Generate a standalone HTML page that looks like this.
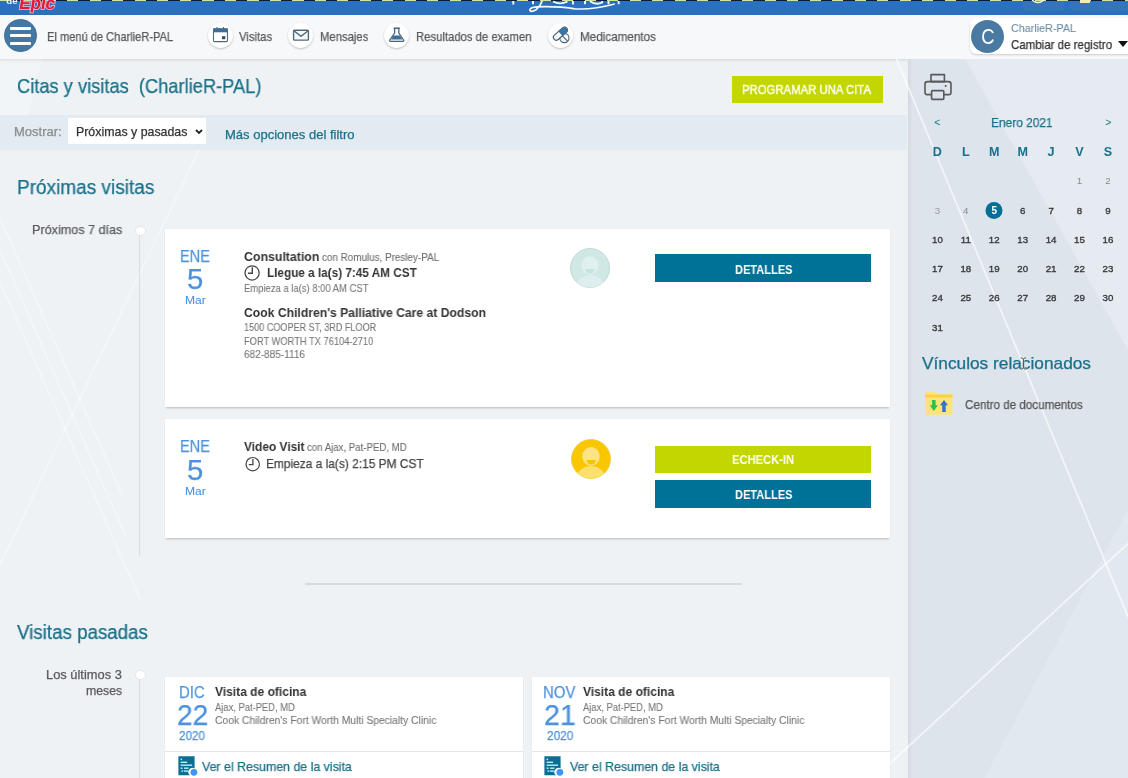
<!DOCTYPE html>
<html><head><meta charset="utf-8">
<style>
*{margin:0;padding:0;box-sizing:border-box}
html,body{width:1128px;height:778px;overflow:hidden}
body{position:relative;background:#eef2f5;font-family:"Liberation Sans",sans-serif;color:#333}
.a{position:absolute}
.t{position:absolute;white-space:nowrap;transform-origin:0 0;line-height:normal;font-family:"Liberation Sans",sans-serif;will-change:transform;-webkit-text-stroke:.25px currentColor}
.circ{position:absolute;border-radius:50%}
.card{position:absolute;background:#fff;box-shadow:0 2px 2px -1px rgba(0,0,0,.22),0 0 1px rgba(0,0,0,.06)}
svg{position:absolute;overflow:visible;will-change:transform}
</style></head><body>
<!-- main background decoration -->
<svg style="left:0;top:0" width="908" height="778">
 <polygon points="0,59 42,59 28,115 0,115" fill="#ffffff" fill-opacity=".25"/>
 <g stroke="#ffffff" stroke-opacity=".3" stroke-width="2.4" fill="none" stroke-linecap="round">
  <line x1="0" y1="282" x2="140" y2="599"/>
  <line x1="0" y1="250" x2="126" y2="537"/>
  <line x1="0" y1="218" x2="123" y2="497"/>
  <line x1="0" y1="565" x2="200" y2="148"/>
 </g>
</svg>

<!-- banner -->
<div class="a" style="left:0;top:0;width:1128px;height:15px;background:#2a70bf"></div>
<div class="a" style="left:1023px;top:0;width:41px;height:11px;background:#3573ba;border-radius:0 0 4px 4px"></div>
<div class="a" style="left:1070px;top:0;width:60px;height:11px;background:#3573ba;border-radius:0 0 4px 4px"></div>
<div class="a" style="left:0;top:0;width:1128px;height:1.3px;background:repeating-linear-gradient(90deg,#d3e49c 0 11px,#081c3e 11px 22.5px)"></div>
<svg style="left:1030px;top:0" width="20" height="6"><path d="M2 0 Q8 5 14 0" stroke="#f4f8e8" stroke-width="1.5" fill="none"/></svg>
<div class="a" style="left:1080px;top:0;width:10px;height:2.5px;background:#f3ecb0"></div>
<svg style="left:0;top:0" width="80" height="15">
 <text x="5.5" y="4.2" font-family="Liberation Sans" font-size="8.5" font-weight="bold" fill="#eaf6ff" transform="translate(0,0) scale(1.15,1)">de</text>
 <g transform="translate(18.6,9.4) skewX(-9) scale(1.02,1)">
  <text x="0" y="0" font-family="Liberation Sans" font-size="17" font-weight="bold" fill="#e0183c" stroke="#f2c4d2" stroke-width="1.5" paint-order="stroke" letter-spacing="-.3">Epic</text>
 </g>
</svg>
<svg style="left:0;top:0" width="1128" height="15">
 <g fill="none" stroke="#f4fbff" stroke-width="1.9" stroke-linecap="butt">
  <path d="M513.3 1 V4.5 M533 1 V4.2 M573 1 V4.5 M585 1 V4.2 M608.5 1 V4.2 M618.7 1 V4.2"/>
  <path d="M553 1.5 Q560 5.2 567.5 1.5"/>
  <path d="M590 1.2 Q596 5.5 602.2 2.5 V1"/>
  <path d="M542.2 1 Q540.5 6 536 9.8 Q530.5 13 529.8 10 Q530 7.2 537 6.8 Q560 6.2 575 8.8 Q592 10 614.8 4" stroke-width="1.7"/>
 </g>
</svg>

<!-- header -->
<div class="a" style="left:0;top:15px;width:1128px;height:44px;background:#f7f8fa;box-shadow:0 1px 3px rgba(0,0,0,.12)"></div>

<!-- sidebar -->
<div class="a" style="left:908px;top:59px;width:220px;height:719px;background:#dde4ec;overflow:hidden">
 <svg style="left:0;top:0" width="220" height="719">
  <polygon points="57,0 220,0 220,291" fill="#ffffff" fill-opacity=".25"/>
  <polygon points="76.5,719 220,450 220,719" fill="#ffffff" fill-opacity=".16"/>
 </svg>
</div>
<div class="a" style="left:908px;top:59px;width:5px;height:719px;background:linear-gradient(90deg,#d3dadf,#d9dfe5 50%,#dfe5eb)"></div>
<svg style="left:0;top:0" width="1128" height="778">
 <g stroke="#ffffff" stroke-opacity=".65" stroke-width="1.8" fill="none">
  <line x1="896.5" y1="59" x2="1128" y2="616.8"/>
  <line x1="870" y1="782" x2="1128" y2="543.4"/>
 </g>
</svg>
<!-- filter bar -->
<div class="a" style="left:0;top:115px;width:907px;height:35px;background:#e2ebf1"></div>
<div class="a" style="left:68px;top:118px;width:138px;height:26px;background:#fff"></div>
<svg style="left:195px;top:129px" width="8" height="6"><path d="M1 1 L4 4 L7 1" stroke="#222" stroke-width="1.8" fill="none"/></svg>

<!-- hamburger -->
<div class="circ" style="left:4px;top:19px;width:33px;height:33px;background:#4577a3;border:1px solid #3d6d97;box-shadow:0 0 1px rgba(0,0,0,.15)"></div>
<div class="a" style="left:10.2px;top:26.6px;width:20.8px;height:3px;background:#fff;border-radius:1px"></div>
<div class="a" style="left:10.2px;top:33.9px;width:20.8px;height:3px;background:#fff;border-radius:1px"></div>
<div class="a" style="left:10.2px;top:41.7px;width:20.8px;height:3px;background:#fff;border-radius:1px"></div>

<!-- nav icons -->
<div class="circ" style="left:207.5px;top:23.3px;width:25px;height:25px;background:#fff;box-shadow:0 1px 2px rgba(60,50,40,.28)"></div>
<svg style="left:207.5px;top:23.3px" width="25" height="25">
 <rect x="5.5" y="5.8" width="14" height="12.8" rx="1" fill="#fff" stroke="#4f6b82" stroke-width="1.1"/>
 <rect x="5" y="5.5" width="15" height="3.8" fill="#3f6d95"/>
 <line x1="9" y1="4" x2="9" y2="6" stroke="#3f6d95" stroke-width="1"/>
 <line x1="15.5" y1="4" x2="15.5" y2="6" stroke="#3f6d95" stroke-width="1"/>
 <rect x="14" y="13.2" width="3.3" height="3" fill="#2f4d66"/>
</svg>
<div class="circ" style="left:288px;top:23.3px;width:25px;height:25px;background:#fff;box-shadow:0 1px 2px rgba(60,50,40,.28)"></div>
<svg style="left:288px;top:23.3px" width="25" height="25">
 <rect x="5.6" y="7.3" width="14.8" height="9.8" rx=".8" fill="#f3fbff" stroke="#52697c" stroke-width="1.4"/>
 <path d="M6.2 8 L13 13.3 L19.8 8" fill="none" stroke="#52697c" stroke-width="1.4"/>
</svg>
<div class="circ" style="left:384.2px;top:23.3px;width:25px;height:25px;background:#fff;box-shadow:0 1px 2px rgba(60,50,40,.28)"></div>
<svg style="left:384.2px;top:23.3px" width="25" height="25">
 <path d="M10.6 5.4 v4.6 L5.8 17 Q5.2 18.3 6.6 18.3 H18.8 Q20.2 18.3 19.6 17 L14.8 10 V5.4" fill="#f3fbff" stroke="#4a6378" stroke-width="1.3" stroke-linejoin="round"/>
 <line x1="9.6" y1="5.2" x2="15.8" y2="5.2" stroke="#4a6378" stroke-width="1.5"/>
 <path d="M9.4 12.6 H16 L18.2 16.6 H7.2 Z" fill="#3f6d95"/>
</svg>
<div class="circ" style="left:548px;top:23.3px;width:25px;height:25px;background:#fff;box-shadow:0 1px 2px rgba(60,50,40,.28)"></div>
<svg style="left:548px;top:23.3px" width="25" height="25">
 <circle cx="16.4" cy="15" r="4.6" fill="#f3fbff" stroke="#4a5d6c" stroke-width="1.1"/>
 <line x1="13.2" y1="11.8" x2="19.6" y2="18.2" stroke="#4a5d6c" stroke-width="1.1"/>
 <g transform="translate(12.4 10.7) rotate(-41)">
  <rect x="-8.4" y="-2.9" width="16.8" height="5.8" rx="2.9" fill="#f3fbff" stroke="#4a5d6c" stroke-width="1.1"/>
  <path d="M0 -3.45 H5 A3.45 3.45 0 0 1 5 3.45 H0 Z" fill="#3f73a0"/>
 </g>
</svg>

<!-- profile pill -->
<div class="a" style="left:970px;top:18px;width:170px;height:36px;background:#fff;border-radius:6px;box-shadow:0 1px 2px rgba(0,0,0,.18)"></div>
<div class="circ" style="left:971px;top:20px;width:33px;height:33px;background:#4a7aa2"></div>
<svg style="left:971px;top:20px" width="33" height="33"><text x="0" y="0" transform="translate(16.8,24.4) scale(.86,1)" text-anchor="middle" font-family="Liberation Sans" font-size="21.5" fill="#fff">C</text></svg>
<svg style="left:1118px;top:41px" width="10" height="7"><path d="M0 0 H10 L5 6 Z" fill="#111"/></svg>

<!-- title button -->
<div class="a" style="left:732px;top:76px;width:151px;height:27px;background:#c4d600"></div>

<!-- timelines -->
<div class="a" style="left:139px;top:231px;width:1px;height:325px;background:#d8dde2"></div>
<div class="circ" style="left:136.2px;top:226.7px;width:8.4px;height:8.4px;background:#fff;box-shadow:0 0 0 .6px #d8dee3"></div>
<div class="a" style="left:305px;top:583px;width:437px;height:2px;background:#d6dbe0"></div>
<div class="a" style="left:139px;top:676px;width:1px;height:102px;background:#d8dde2"></div>
<div class="circ" style="left:136.2px;top:671px;width:8.4px;height:8.4px;background:#fff;box-shadow:0 0 0 .6px #d8dee3"></div>

<!-- cards -->
<div class="card" style="left:165px;top:229px;width:725px;height:178px"></div>
<div class="card" style="left:165px;top:419px;width:725px;height:119px"></div>
<div class="card" style="left:165px;top:677px;width:358px;height:120px"></div>
<div class="card" style="left:532px;top:677px;width:358px;height:120px"></div>
<div class="a" style="left:165px;top:751px;width:358px;height:1px;background:#e3e6e9"></div>
<div class="a" style="left:532px;top:751px;width:358px;height:1px;background:#e3e6e9"></div>

<!-- buttons -->
<div class="a" style="left:655px;top:254px;width:216px;height:28px;background:#007298"></div>
<div class="a" style="left:655px;top:446px;width:216px;height:26.6px;background:#c4d600"></div>
<div class="a" style="left:655px;top:480px;width:216px;height:28px;background:#007298"></div>

<!-- clocks -->
<svg style="left:244px;top:265px" width="16" height="16">
 <circle cx="8.1" cy="7.9" r="7.1" fill="none" stroke="#444" stroke-width="1.25"/>
 <path d="M8.3 2.2 V8.3 H3.9" fill="none" stroke="#444" stroke-width="1.4"/>
</svg>
<svg style="left:244.5px;top:456.8px" width="16" height="16">
 <circle cx="7.7" cy="7.2" r="6.7" fill="none" stroke="#444" stroke-width="1.2"/>
 <path d="M7.9 2 V7.7 H3.8" fill="none" stroke="#444" stroke-width="1.3"/>
</svg>

<!-- avatars -->
<svg style="left:570px;top:248px" width="40" height="40">
 <defs><clipPath id="c1"><circle cx="20" cy="20" r="19.5"/></clipPath></defs>
 <circle cx="20" cy="20" r="19.5" fill="#cfe8e5" stroke="#c3d9d6" stroke-width="1"/>
 <g clip-path="url(#c1)">
  <ellipse cx="20" cy="40" rx="14.5" ry="13" fill="#dceeed"/>
  <ellipse cx="20" cy="17.5" rx="8.7" ry="9.3" fill="#dff0ef"/>
  <path d="M15.4 21 A4.6 4.6 0 0 0 24.6 21 Z" fill="#c8e4e1"/>
 </g>
</svg>
<svg style="left:570.6px;top:439.2px" width="40" height="40">
 <defs><clipPath id="c2"><circle cx="20" cy="20" r="19.5"/></clipPath></defs>
 <circle cx="20" cy="20" r="19.5" fill="#f8c700" stroke="#f1cf4a" stroke-width="1"/>
 <g clip-path="url(#c2)">
  <ellipse cx="20" cy="40" rx="14.5" ry="13" fill="#fbe070"/>
  <ellipse cx="20" cy="17.3" rx="8.7" ry="9.4" fill="#fce486"/>
  <path d="M15.6 21 A4.6 4.6 0 0 0 24.8 21 Z" fill="#f7c500"/>
 </g>
</svg>

<!-- doc icons -->
<svg style="left:177.5px;top:756.3px" width="22" height="22">
 <path d="M0.4 0.2 H16.6 V12.6 A4 4 0 0 0 12.2 19.3 H0.4 Z" fill="#0a6f93"/>
 <g fill="#b7f1ff">
  <rect x="2.6" y="2.6" width="1.5" height="1.5"/>
  <rect x="2.6" y="5.6" width="6.5" height="1.4"/>
  <rect x="2.6" y="8.5" width="11.5" height="1.4"/>
  <rect x="2.6" y="11.5" width="2" height="1.4"/><rect x="6" y="11.5" width="4.5" height="1.4"/>
  <rect x="3.4" y="14.4" width="1.8" height="1.4"/><rect x="6" y="14.4" width="4.2" height="1.4"/>
 </g>
 <circle cx="15.9" cy="16.3" r="3.4" fill="#3c97f2"/>
</svg>
<svg style="left:544.3px;top:756.3px" width="22" height="22">
 <path d="M0.4 0.2 H16.6 V12.6 A4 4 0 0 0 12.2 19.3 H0.4 Z" fill="#0a6f93"/>
 <g fill="#b7f1ff">
  <rect x="2.6" y="2.6" width="1.5" height="1.5"/>
  <rect x="2.6" y="5.6" width="6.5" height="1.4"/>
  <rect x="2.6" y="8.5" width="11.5" height="1.4"/>
  <rect x="2.6" y="11.5" width="2" height="1.4"/><rect x="6" y="11.5" width="4.5" height="1.4"/>
  <rect x="3.4" y="14.4" width="1.8" height="1.4"/><rect x="6" y="14.4" width="4.2" height="1.4"/>
 </g>
 <circle cx="15.9" cy="16.3" r="3.4" fill="#3c97f2"/>
</svg>

<!-- printer -->
<svg style="left:918px;top:68px" width="40" height="36">
 <g fill="none" stroke="#58595b" stroke-width="1.6" stroke-linejoin="round">
  <rect x="13" y="6.6" width="13.4" height="7"/>
  <path d="M13.4 26.6 H9 Q7 26.6 7 24.6 V16 Q7 13.6 9.6 13.6 H30.4 Q33 13.6 33 16 V24.6 Q33 26.6 31 26.6 H26"/>
  <rect x="13.6" y="22.6" width="12.2" height="8.8" rx=".8"/>
 </g>
 <circle cx="27.6" cy="18" r="1" fill="#58595b"/>
</svg>

<!-- calendar -->
<svg style="left:908px;top:100px" width="220" height="240">
 <g font-family="Liberation Sans" fill="#1b7088" font-size="13">
  <text x="29.4" y="25.8" text-anchor="middle" font-size="10.5">&lt;</text>
  <text x="200.3" y="25.8" text-anchor="middle" font-size="10.5">&gt;</text>
 </g>
 <g font-family="Liberation Sans" font-weight="bold" fill="#16708f" font-size="12.6" text-anchor="middle">
  <text x="29.4" y="56">D</text><text x="57.8" y="56">L</text><text x="86.2" y="56">M</text><text x="114.7" y="56">M</text><text x="143.1" y="56">J</text><text x="171.5" y="56">V</text><text x="200" y="56">S</text>
 </g>
 <circle cx="86" cy="110.4" r="8.5" fill="#046e95"/>
 <g font-family="Liberation Sans" font-size="9.7" text-anchor="middle" fill="#383838" stroke="#383838" stroke-width=".35">
  <text x="171.5" y="84.2" fill="#8a8a8a" stroke="none" font-size="9.8">1</text><text x="200" y="84.2" fill="#8a8a8a" stroke="none" font-size="9.8">2</text>
  <text x="29.4" y="113.5" fill="#9a9a9a" stroke="none" font-size="9.8">3</text><text x="57.8" y="113.5" fill="#8a8a8a" stroke="none" font-size="9.8">4</text><text x="86.2" y="113.5" fill="#fff" stroke="none" font-weight="bold" font-size="10">5</text><text x="114.7" y="113.5">6</text><text x="143.1" y="113.5">7</text><text x="171.5" y="113.5">8</text><text x="200" y="113.5">9</text>
  <text x="29.4" y="142.8">10</text><text x="57.8" y="142.8">11</text><text x="86.2" y="142.8">12</text><text x="114.7" y="142.8">13</text><text x="143.1" y="142.8">14</text><text x="171.5" y="142.8">15</text><text x="200" y="142.8">16</text>
  <text x="29.4" y="172.1">17</text><text x="57.8" y="172.1">18</text><text x="86.2" y="172.1">19</text><text x="114.7" y="172.1">20</text><text x="143.1" y="172.1">21</text><text x="171.5" y="172.1">22</text><text x="200" y="172.1">23</text>
  <text x="29.4" y="201.4">24</text><text x="57.8" y="201.4">25</text><text x="86.2" y="201.4">26</text><text x="114.7" y="201.4">27</text><text x="143.1" y="201.4">28</text><text x="171.5" y="201.4">29</text><text x="200" y="201.4">30</text>
  <text x="29.4" y="230.7">31</text>
 </g>
</svg>

<!-- folder -->
<svg style="left:925px;top:392px" width="28" height="24" overflow="visible">
 <path d="M0 0.5 Q0 0 0.5 0 H11 L13 2.6 H27.5 V22.8 H0 Z" fill="#fde37a"/>
 <rect x="0" y="2.6" width="27.5" height="3" fill="#f9d340"/>
 <path d="M7.1 8 H10.6 V13.3 H12.9 L8.85 19 L4.8 13.3 H7.1 Z" fill="#2fbb58"/>
 <path d="M17.2 19.9 H20.7 V13.3 H23 L19 8.1 L15 13.3 H17.2 Z" fill="#2f74c8"/>
</svg>

<div class="t" style="left:46.80px;top:29.60px;font-size:12.35px;color:#58595b;transform:scaleX(0.8986);">El menú de CharlieR-PAL</div>
<div class="t" style="left:239.00px;top:29.50px;font-size:12.35px;color:#58595b;transform:scaleX(0.9177);">Visitas</div>
<div class="t" style="left:319.59px;top:29.50px;font-size:12.35px;color:#58595b;transform:scaleX(0.9137);">Mensajes</div>
<div class="t" style="left:416.00px;top:29.60px;font-size:12.5px;color:#58595b;transform:scaleX(0.9030);">Resultados de examen</div>
<div class="t" style="left:580.25px;top:29.50px;font-size:12.35px;color:#58595b;transform:scaleX(0.9457);">Medicamentos</div>
<div class="t" style="left:1011.30px;top:20.70px;font-size:11.63px;color:#6d8ca6;-webkit-text-stroke:.1px currentColor;transform:scaleX(0.9259);">CharlieR-PAL</div>
<div class="t" style="left:1011.30px;top:37.30px;font-size:12.79px;color:#333333;transform:scaleX(0.9008);">Cambiar de registro</div>
<div class="t" style="left:16.57px;top:74.50px;font-size:19.62px;color:#1b7088;transform:scaleX(0.9321);">Citas y visitas  (CharlieR-PAL)</div>
<div class="t" style="left:742.47px;top:82.30px;font-size:13.66px;color:#fbfde8;-webkit-text-stroke:.5px currentColor;transform:scaleX(0.8305);">PROGRAMAR UNA CITA</div>
<div class="t" style="left:13.68px;top:124.60px;font-size:12.21px;color:#8a8c8e;transform:scaleX(1.0655);">Mostrar:</div>
<div class="t" style="left:75.60px;top:124.60px;font-size:12.06px;color:#333333;transform:scaleX(1.0272);">Próximas y pasadas</div>
<div class="t" style="left:225.08px;top:126.50px;font-size:12.79px;color:#1b7088;transform:scaleX(1.0186);">Más opciones del filtro</div>
<div class="t" style="left:17.04px;top:175.60px;font-size:19.77px;color:#1b7088;transform:scaleX(0.9613);">Próximas visitas</div>
<div class="t" style="left:31.51px;top:221.75px;font-size:12.72px;color:#58595b;transform:scaleX(0.9908);">Próximos 7 días</div>
<div class="t" style="left:17.20px;top:621.90px;font-size:19.33px;color:#1b7088;transform:scaleX(0.9698);">Visitas pasadas</div>
<div class="t" style="left:45.89px;top:667.00px;font-size:12.72px;color:#58595b;transform:scaleX(1.0127);">Los últimos 3</div>
<div class="t" style="left:85.80px;top:684.00px;font-size:12.31px;color:#58595b;transform:scaleX(0.9953);">meses</div>
<div class="t" style="left:243.60px;top:249.60px;font-size:12.5px;color:#333333;font-weight:bold;-webkit-text-stroke:0;transform:scaleX(0.9875);">Consultation</div>
<div class="t" style="left:322.20px;top:251.60px;font-size:10.17px;color:#6e6e6e;-webkit-text-stroke:.1px currentColor;transform:scaleX(0.9706);">con Romulus, Presley-PAL</div>
<div class="t" style="left:267.40px;top:265.40px;font-size:13.08px;color:#333333;font-weight:bold;-webkit-text-stroke:0;transform:scaleX(0.8985);">Llegue a la(s) 7:45 AM CST</div>
<div class="t" style="left:243.60px;top:282.60px;font-size:10.47px;color:#777777;-webkit-text-stroke:.1px currentColor;transform:scaleX(0.9024);">Empieza a la(s) 8:00 AM CST</div>
<div class="t" style="left:243.60px;top:305.90px;font-size:12.21px;color:#333333;font-weight:bold;-webkit-text-stroke:0;transform:scaleX(0.9963);">Cook Children&#x27;s Palliative Care at Dodson</div>
<div class="t" style="left:243.60px;top:321.40px;font-size:10.76px;color:#777777;-webkit-text-stroke:.1px currentColor;transform:scaleX(0.8446);">1500 COOPER ST, 3RD FLOOR</div>
<div class="t" style="left:243.60px;top:334.60px;font-size:10.76px;color:#777777;-webkit-text-stroke:.1px currentColor;transform:scaleX(0.8664);">FORT WORTH TX 76104-2710</div>
<div class="t" style="left:243.60px;top:348.00px;font-size:10.76px;color:#777777;-webkit-text-stroke:.1px currentColor;transform:scaleX(0.9331);">682-885-1116</div>
<div class="t" style="left:243.80px;top:439.40px;font-size:12.79px;color:#333333;font-weight:bold;-webkit-text-stroke:0;transform:scaleX(0.9326);">Video Visit</div>
<div class="t" style="left:307.00px;top:442.40px;font-size:10.17px;color:#6e6e6e;-webkit-text-stroke:.1px currentColor;transform:scaleX(0.9486);">con Ajax, Pat-PED, MD</div>
<div class="t" style="left:266.29px;top:456.40px;font-size:13.08px;color:#444444;transform:scaleX(0.9117);">Empieza a la(s) 2:15 PM CST</div>
<div class="t" style="left:215.00px;top:685.00px;font-size:12.5px;color:#333333;font-weight:bold;-webkit-text-stroke:0;transform:scaleX(0.9616);">Visita de oficina</div>
<div class="t" style="left:215.00px;top:701.60px;font-size:10.47px;color:#777777;-webkit-text-stroke:.1px currentColor;transform:scaleX(0.8966);">Ajax, Pat-PED, MD</div>
<div class="t" style="left:215.00px;top:715.00px;font-size:10.47px;color:#777777;-webkit-text-stroke:.1px currentColor;transform:scaleX(0.9849);">Cook Children&#x27;s Fort Worth Multi Specialty Clinic</div>
<div class="t" style="left:202.40px;top:758.60px;font-size:12.94px;color:#1b7088;transform:scaleX(0.9558);">Ver el Resumen de la visita</div>
<div class="t" style="left:583.00px;top:685.00px;font-size:12.5px;color:#333333;font-weight:bold;-webkit-text-stroke:0;transform:scaleX(0.9616);">Visita de oficina</div>
<div class="t" style="left:583.00px;top:701.60px;font-size:10.47px;color:#777777;-webkit-text-stroke:.1px currentColor;transform:scaleX(0.8966);">Ajax, Pat-PED, MD</div>
<div class="t" style="left:583.00px;top:715.00px;font-size:10.47px;color:#777777;-webkit-text-stroke:.1px currentColor;transform:scaleX(0.9849);">Cook Children&#x27;s Fort Worth Multi Specialty Clinic</div>
<div class="t" style="left:569.60px;top:758.60px;font-size:12.94px;color:#1b7088;transform:scaleX(0.9558);">Ver el Resumen de la visita</div>
<div class="t" style="left:991.39px;top:114.60px;font-size:13.08px;color:#1b7088;transform:scaleX(0.9118);">Enero 2021</div>
<div class="t" style="left:921.70px;top:354.90px;font-size:15.99px;color:#1b7088;transform:scaleX(1.0806);">Vínculos relacionados</div>
<div class="t" style="left:965.30px;top:398.20px;font-size:12.65px;color:#555555;transform:scaleX(0.9211);">Centro de documentos</div>
<div class="t" style="left:734.75px;top:262.50px;font-size:12.65px;color:#ffffff;font-weight:bold;-webkit-text-stroke:0;transform:scaleX(0.8738);">DETALLES</div>
<div class="t" style="left:731.90px;top:452.90px;font-size:12.35px;color:#ffffff;font-weight:bold;-webkit-text-stroke:0;transform:scaleX(0.9044);">ECHECK-IN</div>
<div class="t" style="left:734.75px;top:488.40px;font-size:12.65px;color:#ffffff;font-weight:bold;-webkit-text-stroke:0;transform:scaleX(0.8738);">DETALLES</div>
<div class="t" style="left:179.94px;top:246.90px;font-size:16.86px;color:#4d92dc;transform:scaleX(0.8617);">ENE</div>
<div class="t" style="left:186.79px;top:263.00px;font-size:29.14px;color:#4d92dc;transform:scaleX(1.0071);">5</div>
<div class="t" style="left:184.80px;top:294.00px;font-size:11.34px;color:#4d92dc;-webkit-text-stroke:.1px currentColor;transform:scaleX(1.0640);">Mar</div>
<div class="t" style="left:179.94px;top:437.40px;font-size:16.86px;color:#4d92dc;transform:scaleX(0.8617);">ENE</div>
<div class="t" style="left:186.79px;top:453.50px;font-size:29.14px;color:#4d92dc;transform:scaleX(1.0071);">5</div>
<div class="t" style="left:184.80px;top:484.50px;font-size:11.34px;color:#4d92dc;-webkit-text-stroke:.1px currentColor;transform:scaleX(1.0640);">Mar</div>
<div class="t" style="left:179.08px;top:682.70px;font-size:16.28px;color:#4d92dc;transform:scaleX(0.9169);">DIC</div>
<div class="t" style="left:176.74px;top:697.70px;font-size:29.29px;color:#4d92dc;transform:scaleX(0.9609);">22</div>
<div class="t" style="left:179.20px;top:728.80px;font-size:12.0px;color:#4d92dc;transform:scaleX(0.9733);">2020</div>
<div class="t" style="left:543.48px;top:682.70px;font-size:16.28px;color:#4d92dc;transform:scaleX(0.9186);">NOV</div>
<div class="t" style="left:543.52px;top:697.70px;font-size:29.29px;color:#4d92dc;transform:scaleX(0.9774);">21</div>
<div class="t" style="left:546.50px;top:728.80px;font-size:12.0px;color:#4d92dc;transform:scaleX(0.9844);">2020</div>

<!-- cursor -->
<svg style="left:1019.5px;top:357px" width="7" height="13">
 <path d="M0.8 0.8 Q3.4 0.8 3.4 2.6 V10.4 Q3.4 12.2 0.8 12.2 M6 0.8 Q3.4 0.8 3.4 2.6 M3.4 10.4 Q3.4 12.2 6 12.2" fill="none" stroke="#fff" stroke-opacity=".8" stroke-width="2.2"/>
 <path d="M0.8 0.8 Q3.4 0.8 3.4 2.6 V10.4 Q3.4 12.2 0.8 12.2 M6 0.8 Q3.4 0.8 3.4 2.6 M3.4 10.4 Q3.4 12.2 6 12.2" fill="none" stroke="#4a4a4a" stroke-width="1"/>
</svg>
</body></html>
